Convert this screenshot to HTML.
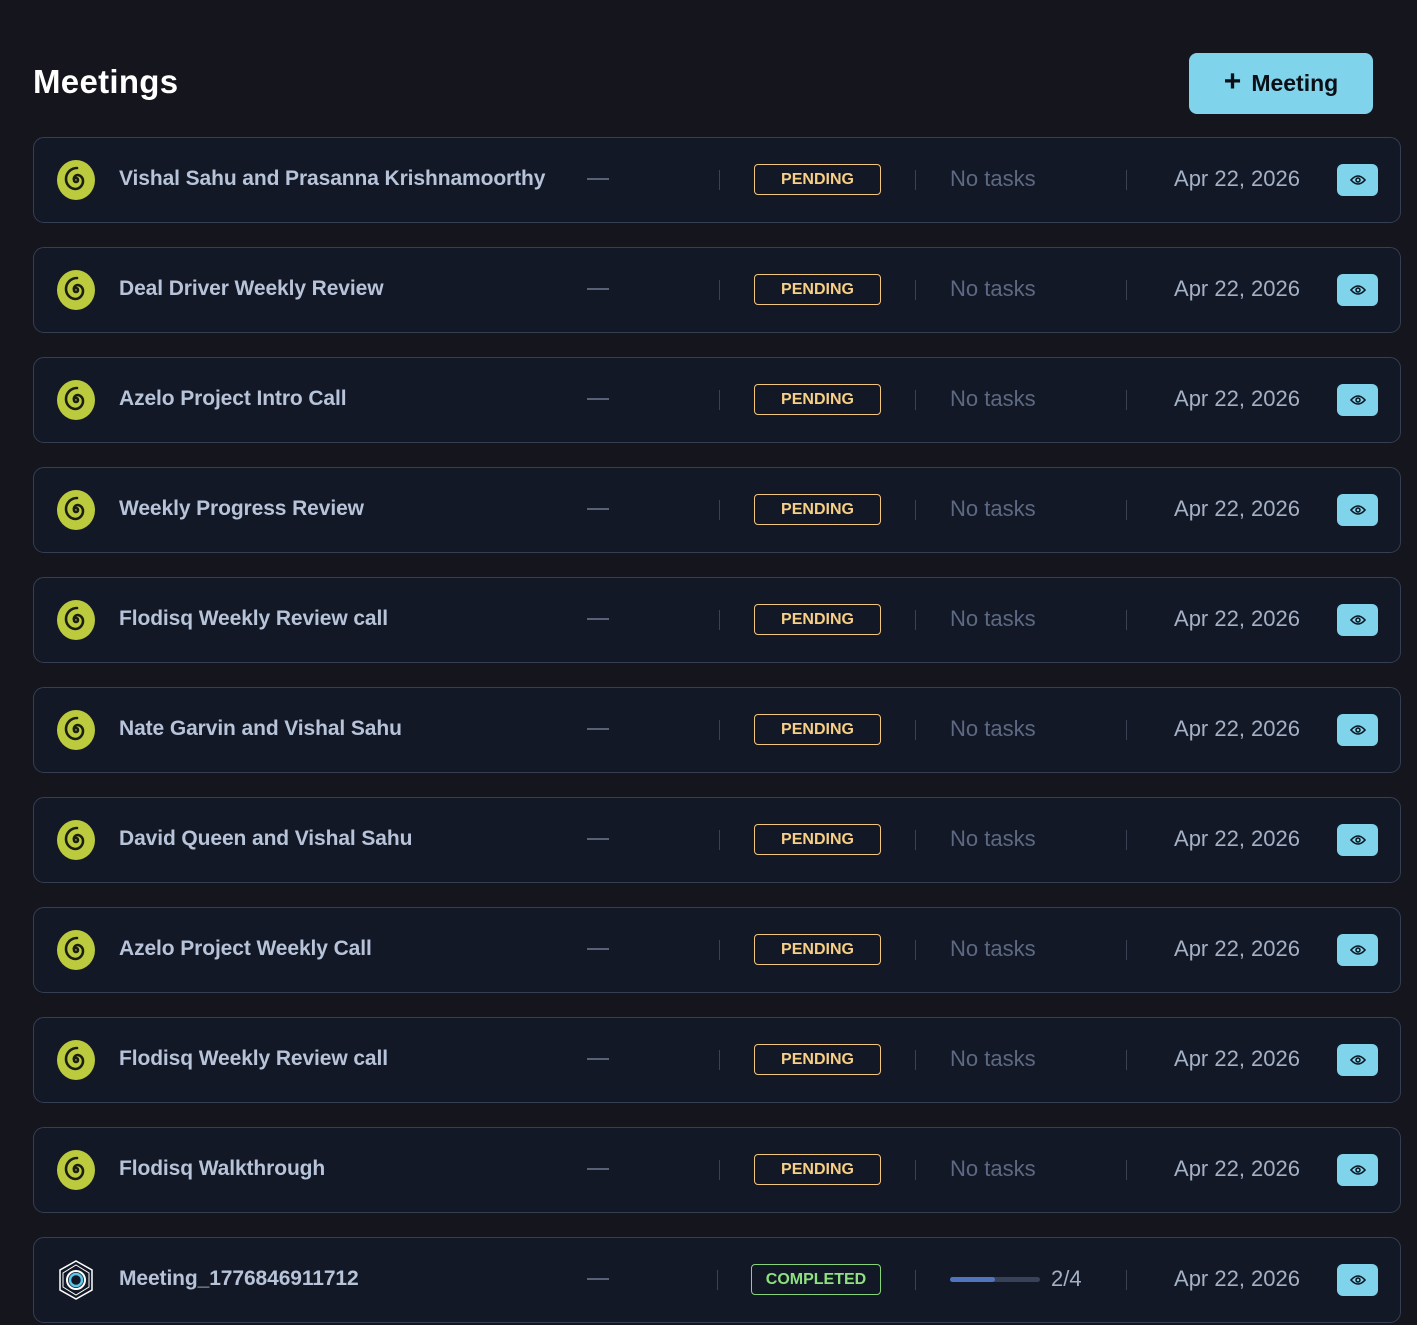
<!DOCTYPE html>
<html><head><style>
*{margin:0;padding:0;box-sizing:border-box}
body{width:1417px;height:1325px;background:#14151d;font-family:"Liberation Sans",sans-serif;position:relative;overflow:hidden}
h1{position:absolute;left:33px;top:63px;font-size:33px;font-weight:700;color:#fff;letter-spacing:0.3px}
.btn{position:absolute;left:1189px;top:53px;width:184px;height:61px;background:#7fd3ea;border-radius:8px;color:#0b0f16;font-size:23px;font-weight:600;display:flex;align-items:center;justify-content:center;gap:10px}
.btn b{font-size:30px;font-weight:700;line-height:1;margin-top:-4px}
.row{position:absolute;left:33px;width:1368px;height:86px;background:#121826;border:1.5px solid #363e52;border-radius:11px}
.ic{position:absolute;left:22px;top:22px;width:40px;height:40px}
.t{position:absolute;left:85px;top:0;line-height:81px;font-size:21px;font-weight:600;color:#b7c3d8;letter-spacing:-0.1px}
.dash{position:absolute;left:553px;top:40px;width:22px;height:2px;background:#586178}
.sep{position:absolute;top:32px;width:1px;height:20px;background:#3a4254}
.badge{position:absolute;left:720px;top:26px;width:127px;height:31px;border:1.5px solid #f2c77b;border-radius:4px;color:#f7cf86;font-size:16px;font-weight:600;text-align:center;line-height:29px}
.badge.c{border-color:#86d47a;color:#8ee080}
.nt{position:absolute;left:916px;top:0;line-height:81px;font-size:22px;color:#5d6982}
.date{position:absolute;right:100px;top:0;line-height:81px;font-size:22px;color:#a4b0c4}
.eye{position:absolute;left:1303px;top:26px;width:41px;height:32px;background:#7fd3ea;border-radius:6px;display:flex;align-items:center;justify-content:center}
.bar{position:absolute;left:916px;top:39px;width:90px;height:5px;background:#394158;border-radius:3px}
.bar i{display:block;width:45px;height:5px;background:#4f74c0;border-radius:3px}
.frac{position:absolute;left:1017px;top:0;line-height:81px;font-size:22px;color:#a4b0c4}
</style></head><body>
<h1>Meetings</h1>
<div class="btn"><b>+</b>Meeting</div>
<div id="rows"></div>
<script>
const titles=["Vishal Sahu and Prasanna Krishnamoorthy","Deal Driver Weekly Review","Azelo Project Intro Call","Weekly Progress Review","Flodisq Weekly Review call","Nate Garvin and Vishal Sahu","David Queen and Vishal Sahu","Azelo Project Weekly Call","Flodisq Weekly Review call","Flodisq Walkthrough","Meeting_1776846911712"];
const spiral='<svg class="ic" viewBox="0 0 40 40"><ellipse cx="20" cy="20" rx="19" ry="20" fill="#bccb3e"/><path d="M20 20 m0 -2 a2 2 0 1 1 -2 2 a4 4 0 0 1 4 -5 a6 6 0 0 1 5 6 a8 8 0 0 1 -8 8 a10 10 0 0 1 -9 -10 a11 11 0 0 1 11 -11" fill="none" stroke="#1a1e14" stroke-width="2.6" stroke-linecap="round"/></svg>';
const hex='<svg class="ic" viewBox="0 0 40 40"><polygon points="20,1 36,10 36,30 20,39 4,30 4,10" fill="none" stroke="#fff" stroke-width="1.5"/><polygon points="20,5 33,13 33,27 20,35 7,27 7,13" fill="none" stroke="#fff" stroke-width="1"/><circle cx="20" cy="20" r="9" fill="none" stroke="#fff" stroke-width="2"/><circle cx="20" cy="20" r="6" fill="none" stroke="#5cc6e8" stroke-width="2.5"/></svg>';
const eye='<svg width="16" height="12" viewBox="0 0 16 12"><path d="M1 6 Q8 -2 15 6 Q8 14 1 6Z" fill="none" stroke="#0b1520" stroke-width="1.6"/><circle cx="8" cy="6" r="2" fill="none" stroke="#0b1520" stroke-width="1.5"/></svg>';
let h='';
titles.forEach((t,i)=>{
 const last=i==10;
 h+=`<div class="row" style="top:${137+i*110}px">${last?hex:spiral}<div class="t">${t}</div><div class="dash"></div><div class="sep" style="left:${last?683:685}px"></div>`+
 (last?`<div class="badge c" style="left:717px;width:130px">COMPLETED</div>`:`<div class="badge">PENDING</div>`)+
 `<div class="sep" style="left:881px"></div>`+
 (last?`<div class="bar"><i></i></div><div class="frac">2/4</div>`:`<div class="nt">No tasks</div>`)+
 `<div class="sep" style="left:1092px"></div><div class="date">Apr 22, 2026</div><div class="eye">${eye}</div></div>`;
});
document.getElementById('rows').innerHTML=h;
</script>
</body></html>
